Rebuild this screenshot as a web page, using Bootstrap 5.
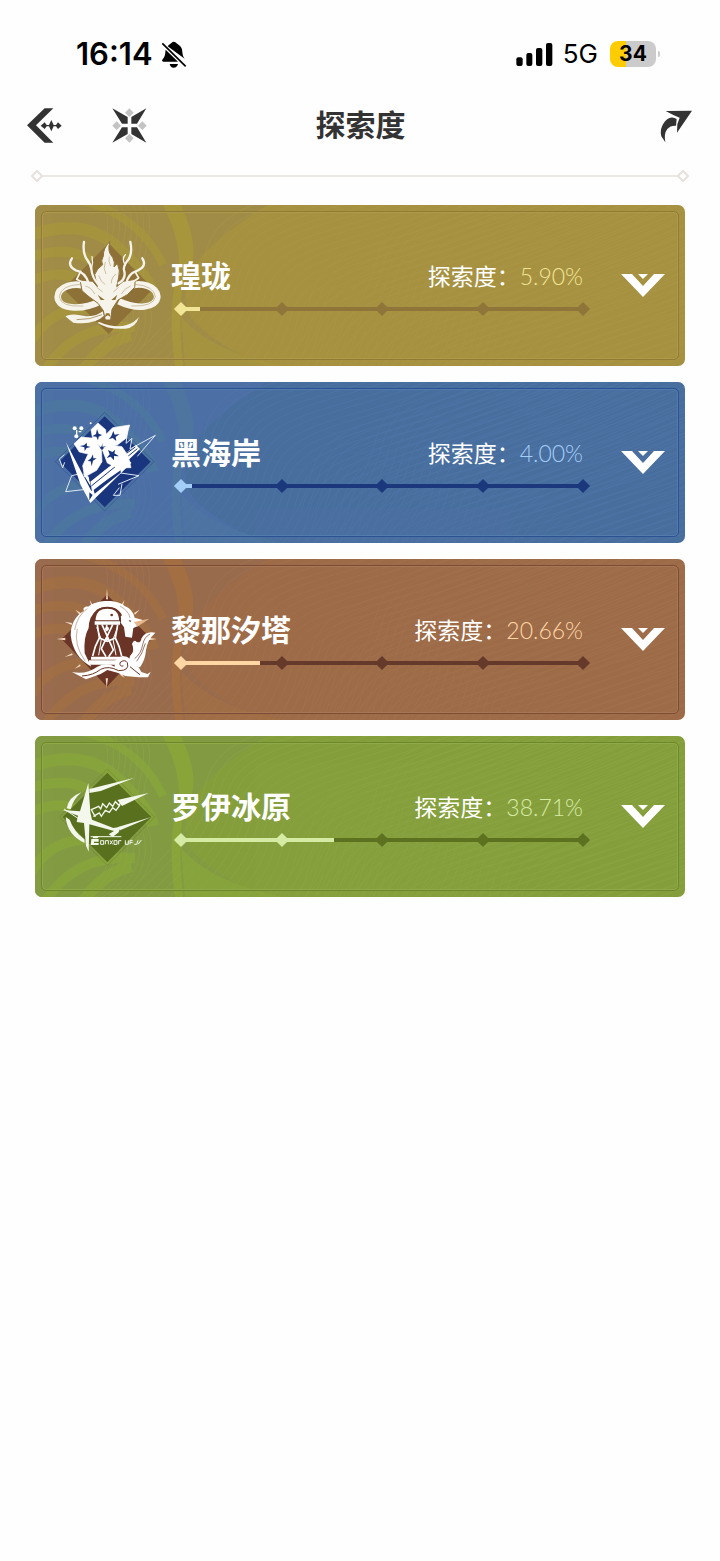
<!DOCTYPE html>
<html lang="zh-CN">
<head>
<meta charset="utf-8">
<meta name="viewport" content="width=device-width, initial-scale=1">
<title>探索度</title>
<link href="https://cdn.jsdelivr.net/npm/bootstrap@5.3.0/dist/css/bootstrap.min.css" rel="stylesheet">
<style>
  body { background: #fefefe; color: #333; font-family: "Noto Sans CJK SC", sans-serif; }
  svg { display: block; flex-shrink: 0; }
  .status { height: 108px; margin-bottom: -18px; padding: 0 60px 0 76px; font-family: Inter, sans-serif; color: #000; }
  .clock { font-size: 31px; font-weight: 600; line-height: 36px; }
  .network { font-size: 26px; line-height: 36px; margin: 0 12px 0 10px; }
  .battery { width: 46px; height: 26px; border-radius: 8px; font-size: 21px; font-weight: 700; line-height: 26px;
    background: linear-gradient(90deg, #fc0 35%, #cbcbcb 35%); }
  .battery::after { content: ""; position: absolute; left: 48px; top: 10px; width: 2px; height: 6px; border-radius: 0 2px 2px 0; background: #cbcbcb; }
  .topbar { height: 70px; padding: 0 26px 0 27px; }
  .topbar .side { flex: 1 1 0; gap: 50px; }
  .topbar h1 { font-size: 30px; font-weight: 700; line-height: 40px; }
  .plain { border: 0; padding: 0; background: none; color: inherit; }
  .rule { margin: 10px 31px 0; color: #e8e1dc; }
  .rule i { height: 2px; background: #ebe7e4; }
  .regions { padding: 23px 35px; }
  .region { height: 161px; border-radius: 7px; padding: 0 20px 0 15px; background: var(--base); color: #fff; }
  .region .art { inset: 0; width: 100%; height: 100%; }
  .region .frame { inset: 6px; border: 1px solid var(--line); box-shadow: inset 0 0 0 1px var(--glow); border-radius: 5px; }
  .region .info { margin: 0 38px 0 9px; }
  .region h2 { font-size: 30px; font-weight: 700; line-height: 38px; }
  .rate { font-size: 23px; line-height: 40px; }
  .rate b { font-family: Lato, sans-serif; font-weight: 300; color: var(--lit); }
  .track { height: 14px; margin: 6px 0 0 10px; }
  .track .progress { height: 4px; margin-left: -5px; background: var(--dim); border-radius: 0; overflow: visible; --bs-progress-bar-bg: var(--lit); }
  .ticks { inset: 0 -5px; }
  .ticks i { width: 10px; height: 10px; background: var(--dim); transform: rotate(45deg); }
  .ticks .on { background: var(--lit); }
  .gold  { --base: #a69140; --shade: #a18d47; --swirl: #aa9a39; --line: #917b34; --glow: #ad9a4c; --dim: #8f7539; --lit: #f3e596; --mark: #8e7137; }
  .blue  { --base: #496e9f; --shade: #4d70a5; --swirl: #4e789f; --line: #2b5292; --glow: #537bab; --dim: #1b387d; --lit: #a4cdf8; --mark: #19357d; }
  .brown { --base: #9d6c49; --shade: #9a6b4e; --swirl: #a5713f; --line: #7c4c34; --glow: #a77654; --dim: #653a2a; --lit: #ffd6a4; --mark: #6a3426; }
  .green { --base: #869f3d; --shade: #839c43; --swirl: #8baa38; --line: #6f872b; --glow: #8faa49; --dim: #5c7220; --lit: #d5eba4; --mark: #59711e; }
</style>
</head>
<body>

<svg width="0" height="0" class="position-absolute" aria-hidden="true">
  <defs>
    <g id="l1"><path d="M-60 170C-10 120 10 100 20 60S60 10 130 -10 260 -60 330 -90"/><path d="M-52 172C-2 124 16 104 27 64S67 16 137 -4 267 -54 337 -84"/></g>
    <g id="l2"><use href="#l1"/><use href="#l1" x="13" y="10"/></g>
    <g id="l3"><use href="#l2"/><use href="#l2" x="26" y="20"/></g>
    <g id="l4"><use href="#l3"/><use href="#l3" x="52" y="40"/></g>
    <g id="l5"><use href="#l4"/><use href="#l4" x="104" y="80"/></g>
    <g id="c1"><path d="M20 170C60 160 85 130 70 90S90 20 60 -10"/></g>
    <g id="c2"><use href="#c1"/><use href="#c1" x="6"/></g>
    <g id="c3"><use href="#c2"/><use href="#c2" x="12"/></g>
    <g id="c4"><use href="#c3"/><use href="#c3" x="24"/></g>
    <symbol id="art" viewBox="0 0 650 161" preserveAspectRatio="xMinYMid slice">
      <path d="M0 0H232Q180 32 158 62 142 96 160 118 190 146 232 161H0Z" fill="var(--shade)"/>
      <g fill="none" stroke="var(--swirl)">
        <path d="M-4 30Q50 12 82 42T118 90" stroke-width="12" opacity=".6"/>
        <path d="M-4 52Q40 38 64 62M-4 76Q28 62 50 78" stroke-width="10" opacity=".6"/>
        <path d="M40 -6Q104 8 128 60" stroke-width="8" opacity=".6"/>
        <path d="M-6 140Q20 92 76 108M10 166Q40 118 100 122" stroke-width="10" opacity=".6"/>
        <path d="M48 168Q62 140 96 130" stroke-width="12" opacity=".6"/>
      </g>
      <path d="M128 0H146Q164 40 156 60 140 82 148 161H140Q132 100 143 68 148 40 128 0Z" fill="var(--swirl)" opacity=".7"/>
      <path d="M146 112Q178 148 250 161H150Z" fill="var(--swirl)" opacity=".5"/>
      <g fill="none" stroke="var(--glow)" opacity=".4">
        <use href="#c4"/>
        <use href="#l5" x="150" y="-10"/><use href="#l5" x="320" y="0"/><use href="#l5" x="255" y="35"/>
      </g>
    </symbol>
    <symbol id="chev" viewBox="0 0 44 24"><path d="M0 0H11L22 12 33 0H44L22 23Z" fill="#fff"/><path d="M17 0H27L22 5Z" fill="#fff"/></symbol>
  </defs>
</svg>

<div class="status d-flex justify-content-between align-items-center">
  <div class="d-flex align-items-center gap-2">
    <span class="clock">16:14</span>
    <svg width="27" height="27" viewBox="480 60 81 81" role="img" aria-label="静音">
      <path d="M500 76C506 68 510 68 512 65Q518 60 525 65C527 68 535 70 541 80 546 90 542 102 551 113Z"/>
      <path d="M494 86L531 122H487Q480 120 486 113C494 104 492 96 494 86Z"/>
      <path d="M484 67L554 136" stroke="#000" stroke-width="5"/>
      <path d="M506 129H531Q528 140 518 140T506 129Z"/>
    </svg>
  </div>
  <div class="d-flex align-items-center">
    <svg width="37" height="27" viewBox="108 60 111 81" role="img" aria-label="信号"><rect x="109" y="109" width="19" height="26" rx="6"/><rect x="139" y="96" width="18" height="39" rx="6"/><rect x="168" y="81" width="19" height="54" rx="6"/><rect x="198" y="66" width="19" height="69" rx="6"/></svg>
    <span class="network">5G</span>
    <span class="battery position-relative text-center me-1">34</span>
  </div>
</div>

<header class="topbar d-flex align-items-center">
  <div class="side d-flex">
    <button class="plain" type="button" aria-label="返回">
      <svg width="35" height="35" viewBox="81 265 105 105" fill="#333"><path d="M134 266H160L108 317 160 369H134L81 317Z"/><path d="M122 318L134 308 140 316H147L154 301 161 316H168L174 308 185 318 174 328 168 320H161L154 335 147 320H140L134 328Z"/></svg>
    </button>
    <button class="plain" type="button" aria-label="首页">
      <svg width="35" height="35" viewBox="337 265 105 105" fill="#333"><path d="M338 266L384 292V312H367ZM440 266L395 292V312H412ZM338 369L384 343V323H367ZM440 369L395 343V323H412Z"/><path d="M389 266L402 279 389 292 376 279ZM389 343L402 356 389 369 376 356ZM351 305L364 318 351 331 338 318ZM428 305L441 318 428 331 415 318Z" fill="#c3c3c3"/></svg>
    </button>
  </div>
  <h1 class="m-0 pb-1">探索度</h1>
  <div class="side d-flex justify-content-end">
    <button class="plain" type="button" aria-label="分享">
      <svg width="35" height="35" viewBox="537 265 105 105" fill="#333"><path d="M557 274L636 273 591 339 592 314 599 294 580 286Z"/><path d="M590 298Q572 286 554 306 538 326 544 350L556 368Q551 342 562 328 571 317 588 318Z"/></svg>
    </button>
  </div>
</header>

<div class="rule d-flex align-items-center">
  <svg width="12" height="12" viewBox="0 0 12 12" fill="none" stroke="currentColor" stroke-width="2"><path d="M6 1L11 6 6 11 1 6Z"/></svg>
  <i class="flex-grow-1"></i>
  <svg width="12" height="12" viewBox="0 0 12 12" fill="none" stroke="currentColor" stroke-width="2"><path d="M6 1L11 6 6 11 1 6Z"/></svg>
</div>

<main class="regions d-flex flex-column gap-3">

  <section class="region gold position-relative overflow-hidden d-flex align-items-center">
    <svg class="art position-absolute" aria-hidden="true"><use href="#art"/></svg>
    <div class="frame position-absolute"></div>
    <svg class="position-relative" width="112" height="112" viewBox="60 90 336 336" fill="#f5f3ea" aria-hidden="true">
      <path d="M236 130L370 266 236 402 100 266Z" fill="var(--mark)"/>
      <g fill="none" stroke="#f5f3ea" stroke-width="20">
        <path d="M172 260C130 244 84 262 83 291 84 326 150 334 212 304"/>
        <path d="M294 260C336 242 380 262 382 290 380 324 320 330 266 304"/>
      </g>
      <g fill="none" stroke="var(--mark)" stroke-width="2" opacity=".6"><path d="M150 253Q92 256 88 290 92 322 160 318M316 253Q372 258 376 290 372 320 304 318"/></g>
      <path d="M106 349Q124 338 164 348 196 352 218 334L222 347Q192 376 130 368 118 360 106 349Z"/>
      <path d="M140 359Q180 360 216 344" fill="none" stroke="var(--mark)" stroke-width="2"/>
      <path d="M208 366Q256 386 290 375 316 366 327 350 318 382 286 386 236 390 202 368Z"/>
      <path d="M150 240L188 244 202 260 194 224Q200 206 218 194 211 184 220 168 219 145 240 124 230 155 248 172 256 188 252 201L262 190Q272 212 266 232L260 260 280 244 316 238 314 262 292 284 264 300 246 328 242 360H226L220 332 204 310 174 288 156 272Z" stroke="var(--mark)" stroke-width="3"/>
      <g fill="none" stroke="#f5f3ea" stroke-linecap="round" stroke-linejoin="round">
        <path d="M204 252Q186 232 184 207 183 195 172 180 157 160 162 126" stroke-width="7"/>
        <path d="M184 206Q190 188 186 170" stroke-width="4"/>
        <path d="M176 250Q166 216 137 211 110 196 126 175" stroke-width="7"/>
        <path d="M266 250Q290 236 282 210 279 198 296 178 308 156 301 126" stroke-width="7"/>
        <path d="M286 196Q274 176 286 164" stroke-width="4"/>
        <path d="M290 250Q292 222 324 211 352 198 337 175" stroke-width="7"/>
        <path d="M152 214L140 238 156 246M316 216L326 234 308 246" stroke-width="5"/>
      </g>
      <g fill="none" stroke="var(--mark)" stroke-width="2" opacity=".6"><path d="M166 258Q184 262 194 282M302 258Q284 264 274 282M206 226Q210 244 226 254M258 222Q244 232 244 250M226 186Q218 206 228 222M238 170Q234 184 242 198M200 262L218 276M266 262L250 276"/></g>
      <path d="M203 284L224 300 212 300ZM262 284L244 300 256 300ZM224 352L228 340H238L242 352 234 346Z" fill="var(--mark)"/>
    </svg>
    <div class="info position-relative flex-grow-1">
      <div class="d-flex justify-content-between"><h2 class="m-0">瑝珑</h2><div class="rate">探索度：<b>5.90%</b></div></div>
      <div class="track position-relative d-flex align-items-center">
        <div class="progress flex-grow-1" role="progressbar" aria-label="瑝珑探索度" aria-valuenow="5.9" aria-valuemin="0" aria-valuemax="100"><div class="progress-bar" style="width:5.9%"></div></div>
        <div class="ticks position-absolute d-flex justify-content-between align-items-center"><i class="on"></i><i></i><i></i><i></i><i></i></div>
      </div>
    </div>
    <button class="plain position-relative" type="button" aria-label="展开瑝珑"><svg width="44" height="24"><use href="#chev"/></svg></button>
  </section>

  <section class="region blue position-relative overflow-hidden d-flex align-items-center">
    <svg class="art position-absolute" aria-hidden="true"><use href="#art"/></svg>
    <div class="frame position-absolute"></div>
    <svg class="position-relative" width="112" height="112" viewBox="60 96 336 336" fill="#fff" aria-hidden="true">
      <path d="M224 112L372 260 224 408 76 260Z" fill="none" stroke="var(--mark)" stroke-width="2" opacity=".5"/>
      <path d="M224 124L362 260 224 397 88 260Z" fill="var(--mark)"/>
      <g fill="none" stroke="#dce7f6" stroke-width="3">
        <path d="M292 172L288 205 306 190 300 222 376 181 322 244"/>
        <path d="M103 239L88 252 98 278 104 262M152 296L125 302 107 350 168 343"/>
        <path d="M258 292L327 302 264 328M276 326L270 361H250L268 338"/>
      </g>
      <path d="M108 202L184 348 296 254 304 264 181 384 152 330Z"/>
      <path d="M178 352V376L188 360ZM190 342L272 286V293L194 356Z" fill="var(--mark)"/>
      <path d="M181 320L318 210 330 222 244 304 186 349ZM158 294L176 305 182 334Z"/>
      <path d="M178 316L316 216M184 333L322 221" stroke="var(--mark)" stroke-width="3"/>
      <path d="M212 216L188 192 183 164 204 144 227 164 229 188ZM218 214L224 182 248 158 299 150 288 190 262 210ZM212 222L178 238 148 231 132 206 154 186 192 190ZM214 222L216 260 200 286 164 306 158 272 174 238ZM216 222L236 209 276 215 294 242 303 278 262 279 232 264Z" stroke="#fff" stroke-width="2"/>
      <g fill="var(--mark)">
        <path d="M201 162L206 176 216 180 206 185 204 196 199 185 187 184 198 177ZM250 168L254 179 269 177 257 186 259 198 248 189 236 193 244 183ZM170 203L171 213 182 216 170 219 164 228 163 217 149 213 162 211ZM189 238L190 250 200 250 189 257 185 274 182 259 173 258 183 250ZM234 225L247 231 256 224 253 235 267 244 252 243 252 256 242 245 230 249 239 238Z"/>
        <circle cx="216" cy="220" r="4"/>
      </g>
      <g><circle cx="134" cy="160" r="6"/><circle cx="154" cy="160" r="6"/><circle cx="139" cy="184" r="6"/><circle cx="182" cy="145" r="3"/><path d="M138 165H142V180H138ZM146 168H154V172H146Z"/></g>
    </svg>
    <div class="info position-relative flex-grow-1">
      <div class="d-flex justify-content-between"><h2 class="m-0">黑海岸</h2><div class="rate">探索度：<b>4.00%</b></div></div>
      <div class="track position-relative d-flex align-items-center">
        <div class="progress flex-grow-1" role="progressbar" aria-label="黑海岸探索度" aria-valuenow="4" aria-valuemin="0" aria-valuemax="100"><div class="progress-bar" style="width:4%"></div></div>
        <div class="ticks position-absolute d-flex justify-content-between align-items-center"><i class="on"></i><i></i><i></i><i></i><i></i></div>
      </div>
    </div>
    <button class="plain position-relative" type="button" aria-label="展开黑海岸"><svg width="44" height="24"><use href="#chev"/></svg></button>
  </section>

  <section class="region brown position-relative overflow-hidden d-flex align-items-center">
    <svg class="art position-absolute" aria-hidden="true"><use href="#art"/></svg>
    <div class="frame position-absolute"></div>
    <svg class="position-relative" width="112" height="112" viewBox="60 102 336 336" fill="#fff" aria-hidden="true">
      <path d="M231 134L365 267 231 410 95 267Z" fill="var(--mark)"/>
      <path d="M231 116L234 148H228ZM179 150L188 164 184 168ZM284 150L274 164 278 168ZM136 179L152 189 149 194ZM329 179L312 189 315 194ZM104 215L126 219 125 225ZM104 321L128 315 126 310ZM80 267L106 263V271ZM380 267L356 263V271ZM134 356L150 343 152 348ZM230 414L227 385H234ZM178 384L188 370 190 374ZM284 384L274 370 270 374Z" fill="#f6dcc2"/>
      <path d="M122 256Q122 206 162 182C156 174 168 168 174 170 200 149 260 146 284 168Q307 176 314 203L338 210 322 229 310 234 306 263 286 260 282 232 264 206 276 196Q270 181 252 174 226 166 202 178 176 200 176 234 160 262 164 310L184 350Q130 322 122 256Z"/>
      <path d="M172 176Q142 196 134 240M142 236Q130 284 166 334M270 168Q296 182 300 204" fill="none" stroke="var(--mark)" stroke-width="2" opacity=".6"/>
      <path d="M312 216L358 206 322 230Z" fill="#e6b68d"/>
      <path d="M296 210L304 212 300 217Z" fill="var(--mark)"/>
      <path d="M194 214V204Q198 173 232 173T270 204V214Z" stroke="var(--mark)" stroke-width="6"/>
      <path d="M194 214H270V224H194Z"/>
      <circle cx="245" cy="195" r="4" fill="var(--mark)"/>
      <g fill="none" stroke="#fff" stroke-width="5"><path d="M202 224L208 264Q193 290 188 318M263 224L256 264Q270 290 275 318M216 224L250 300 236 320M248 224L214 296 228 320M208 264L232 274 256 264M230 224V244"/><path d="M200 232L214 268 206 316M263 232L249 268 258 316" stroke-width="3"/></g>
      <circle cx="231" cy="236" r="6"/><circle cx="231" cy="266" r="5"/>
      <path d="M183 320H276V329H183ZM177 331H268V344H177Z"/>
      <path d="M376 248Q346 242 334 266 332 280 320 276 312 266 306 282 316 304 300 318L296 336 306 348 330 352Q346 330 348 300 352 270 376 248Z"/>
      <path d="M360 252Q342 262 338 284 334 310 314 326M346 280Q338 310 320 334" fill="none" stroke="var(--mark)" stroke-width="2"/>
      <path d="M126 366Q170 374 202 350 230 336 254 350 250 324 278 318 306 320 306 344L326 352 334 366 352 372 362 366 354 382 326 382 286 378 262 368 232 360 212 372 168 388 126 366Z"/>
      <path d="M156 378Q190 376 212 358 236 346 266 362 300 362 292 338 284 326 270 338 268 350 280 348M300 350Q314 362 330 374" fill="none" stroke="var(--mark)" stroke-width="3"/>
      <circle cx="328" cy="344" r="4"/>
    </svg>
    <div class="info position-relative flex-grow-1">
      <div class="d-flex justify-content-between"><h2 class="m-0">黎那汐塔</h2><div class="rate">探索度：<b>20.66%</b></div></div>
      <div class="track position-relative d-flex align-items-center">
        <div class="progress flex-grow-1" role="progressbar" aria-label="黎那汐塔探索度" aria-valuenow="20.66" aria-valuemin="0" aria-valuemax="100"><div class="progress-bar" style="width:20.66%"></div></div>
        <div class="ticks position-absolute d-flex justify-content-between align-items-center"><i class="on"></i><i></i><i></i><i></i><i></i></div>
      </div>
    </div>
    <button class="plain position-relative" type="button" aria-label="展开黎那汐塔"><svg width="44" height="24"><use href="#chev"/></svg></button>
  </section>

  <section class="region green position-relative overflow-hidden d-flex align-items-center">
    <svg class="art position-absolute" aria-hidden="true"><use href="#art"/></svg>
    <div class="frame position-absolute"></div>
    <svg class="position-relative" width="112" height="112" viewBox="60 96 336 336" fill="#f4f7ec" aria-hidden="true">
      <path d="M232 120L374 264 232 410 88 264Z" fill="none" stroke="var(--mark)" stroke-width="2" opacity=".5"/>
      <path d="M232 131L364 264 232 400 98 264Z" fill="var(--mark)"/>
      <path d="M175 162L181 250 186 272 250 297 272 293 266 310 248 324 236 316 252 306 178 286 176 368 168 350 162 282 140 279 144 260 98 243 150 247Z"/>
      <path d="M178 192V180L314 146 212 186Z"/>
      <path d="M262 213L356 192 276 231ZM264 294L364 264 270 304Z"/>
      <path d="M154 190Q116 204 110 238L122 241Q130 210 154 190ZM107 264Q112 318 164 342L163 331Q132 308 119 272Z"/>
      <path d="M102 240L144 268" stroke="#f4f7ec" stroke-width="3"/>
      <path d="M196 264L184 242 206 232 212 240 218 224 230 236 238 222 248 232 256 218 266 228 282 214M190 262L208 252 214 262 226 244 238 250 248 236 258 244 270 228" fill="none" stroke="#f4f7ec" stroke-width="4"/>
      <path d="M190 322H208L202 328H188ZM184 330H206V338H192V342H206V348H182Z"/>
      <g fill="none" stroke="#f4f7ec" stroke-width="3"><path d="M182 323H274M212 346V335H221V346ZM226 346V335H235V346M240 334L248 346M248 334L240 346M252 346V335H261V346H252M266 346V335H274M286 334V346H295V334M300 346V334H308M300 340H308M313 346H320L324 334M324 346L334 333"/></g>
    </svg>
    <div class="info position-relative flex-grow-1">
      <div class="d-flex justify-content-between"><h2 class="m-0">罗伊冰原</h2><div class="rate">探索度：<b>38.71%</b></div></div>
      <div class="track position-relative d-flex align-items-center">
        <div class="progress flex-grow-1" role="progressbar" aria-label="罗伊冰原探索度" aria-valuenow="38.71" aria-valuemin="0" aria-valuemax="100"><div class="progress-bar" style="width:38.71%"></div></div>
        <div class="ticks position-absolute d-flex justify-content-between align-items-center"><i class="on"></i><i class="on"></i><i></i><i></i><i></i></div>
      </div>
    </div>
    <button class="plain position-relative" type="button" aria-label="展开罗伊冰原"><svg width="44" height="24"><use href="#chev"/></svg></button>
  </section>

</main>

<script src="https://cdn.jsdelivr.net/npm/bootstrap@5.3.0/dist/js/bootstrap.bundle.min.js"></script>
</body>
</html>
